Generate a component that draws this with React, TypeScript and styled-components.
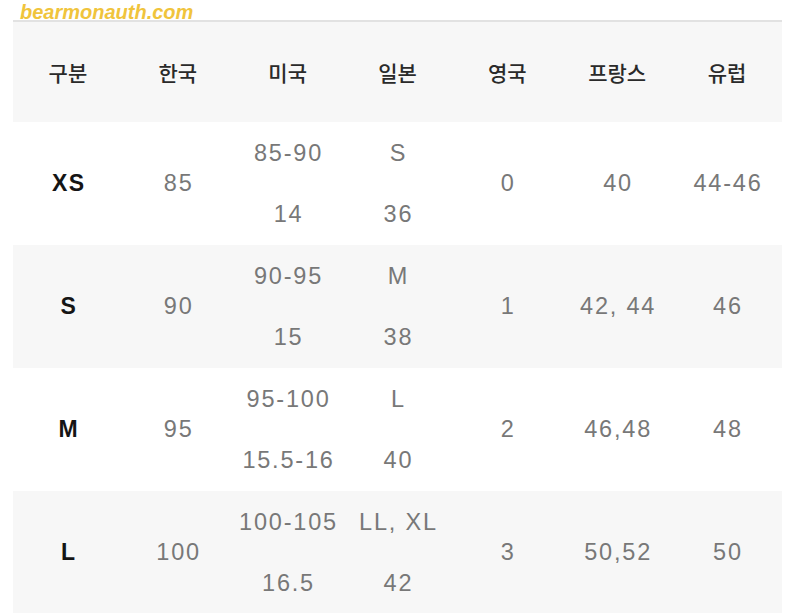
import styled, { createGlobalStyle } from "styled-components";

const GlobalStyle = createGlobalStyle`
  html, body {
    margin: 0;
    padding: 0;
    background: #ffffff;
  }
  body {
    font-family: "Liberation Sans", "Noto Sans CJK KR", sans-serif;
  }
`;

type SizeRow = {
  label: string;
  kr: string;
  us: [string, string];
  jp: [string, string];
  uk: string;
  fr: string;
  eu: string;
};

const headers = ["구분", "한국", "미국", "일본", "영국", "프랑스", "유럽"];

const rows: SizeRow[] = [
  { label: "XS", kr: "85", us: ["85-90", "14"], jp: ["S", "36"], uk: "0", fr: "40", eu: "44-46" },
  { label: "S", kr: "90", us: ["90-95", "15"], jp: ["M", "38"], uk: "1", fr: "42, 44", eu: "46" },
  { label: "M", kr: "95", us: ["95-100", "15.5-16"], jp: ["L", "40"], uk: "2", fr: "46,48", eu: "48" },
  { label: "L", kr: "100", us: ["100-105", "16.5"], jp: ["LL, XL", "42"], uk: "3", fr: "50,52", eu: "50" },
];

const App = () => {
  return (
    <Page>
      <GlobalStyle />
      <Watermark>bearmonauth.com</Watermark>
      <SizeTable>
        <HeaderRow>
          {headers.map((h) => (
            <HeadCell key={h}>{h}</HeadCell>
          ))}
        </HeaderRow>
        {rows.map((r, i) => (
          <BodyRow key={r.label} $shaded={i % 2 === 1}>
            <SizeLabel>{r.label}</SizeLabel>
            <Cell>{r.kr}</Cell>
            <Cell>
              <Stack>
                <span>{r.us[0]}</span>
                <span>{r.us[1]}</span>
              </Stack>
            </Cell>
            <Cell>
              <Stack>
                <span>{r.jp[0]}</span>
                <span>{r.jp[1]}</span>
              </Stack>
            </Cell>
            <Cell>{r.uk}</Cell>
            <Cell>{r.fr}</Cell>
            <Cell>{r.eu}</Cell>
          </BodyRow>
        ))}
      </SizeTable>
    </Page>
  );
};

const Page = styled.div`
  position: relative;
  width: 800px;
  height: 613px;
  overflow: hidden;
  padding: 20px 18px 0 13px;
  box-sizing: border-box;
`;

const Watermark = styled.div`
  position: absolute;
  top: 1px;
  left: 20px;
  font-family: "Liberation Sans", sans-serif;
  font-size: 20px;
  font-weight: 700;
  font-style: italic;
  color: #f0c43c;
  z-index: 2;
`;

const SizeTable = styled.div`
  display: flex;
  flex-direction: column;
  border-top: 2px solid #e2e2e2;
`;

const HeaderRow = styled.div`
  display: grid;
  grid-template-columns: repeat(7, 1fr);
  height: 100px;
  align-items: center;
  background: #f7f7f7;
`;

const HeadCell = styled.div`
  text-align: center;
  font-family: "Noto Sans CJK KR", sans-serif;
  font-size: 21px;
  font-weight: 500;
  color: #2a2a2a;
`;

const BodyRow = styled.div<{ $shaded: boolean }>`
  display: grid;
  grid-template-columns: repeat(7, 1fr);
  height: 123px;
  align-items: center;
  background: ${(p) => (p.$shaded ? "#f7f7f7" : "#ffffff")};
`;

const Cell = styled.div`
  text-align: center;
  font-family: "Liberation Sans", sans-serif;
  font-size: 23.5px;
  letter-spacing: 1.8px;
  padding-left: 1.8px;
  color: #787878;
`;

const SizeLabel = styled(Cell)`
  font-weight: 700;
  font-size: 23px;
  color: #151515;
  letter-spacing: 1.5px;
`;

const Stack = styled.div`
  display: flex;
  flex-direction: column;
  align-items: center;
  line-height: 61px;
`;

export default App;
